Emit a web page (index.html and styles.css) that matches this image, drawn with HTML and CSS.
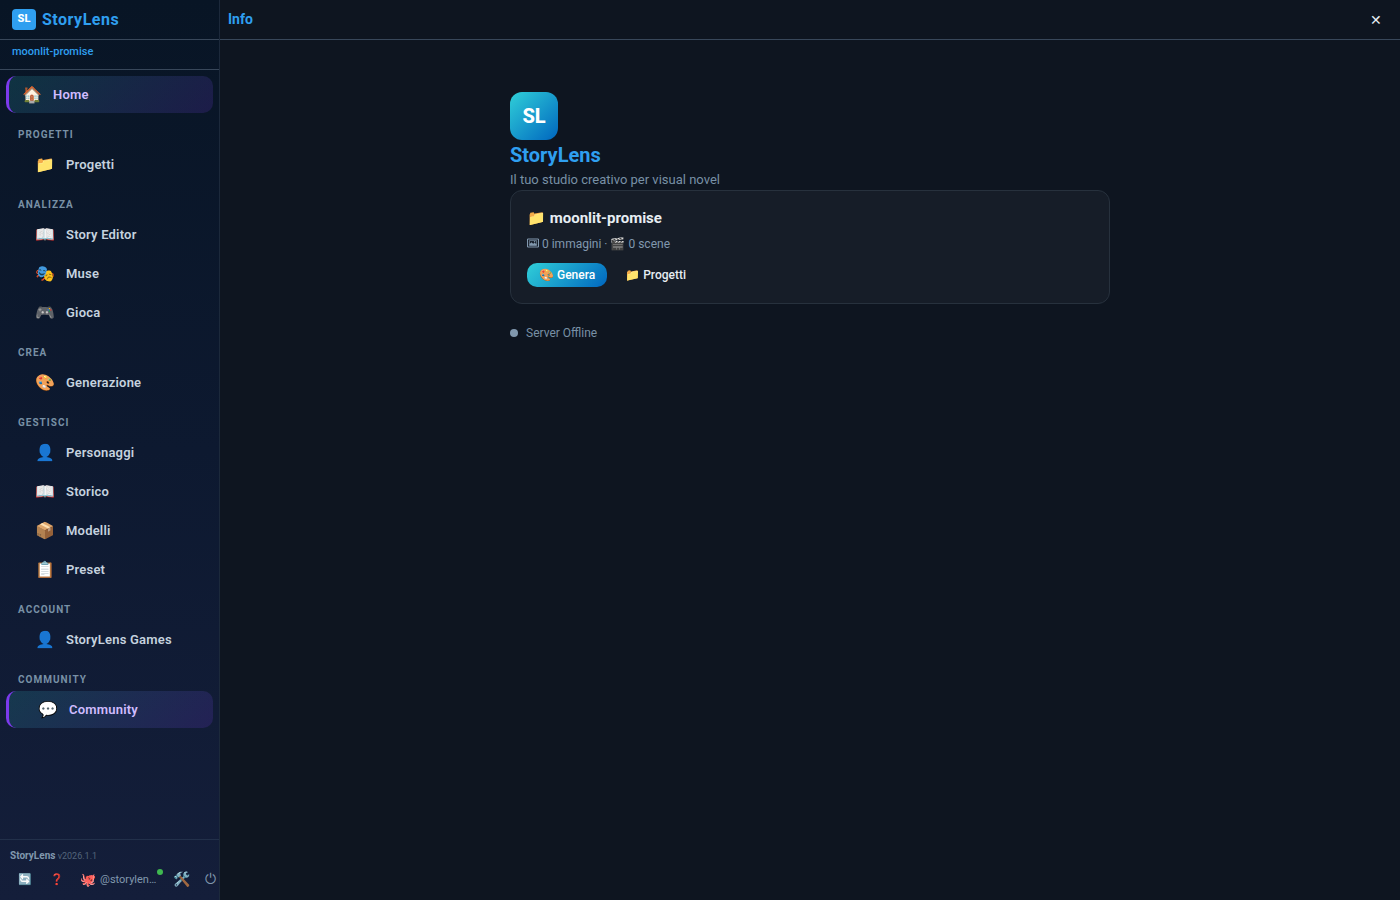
FILE: index.html
```html
<!DOCTYPE html>
<html lang="it">
<head>
    <meta charset="UTF-8">
    <meta name="viewport" content="width=device-width, initial-scale=1.0">
    <title>StoryLens</title>
    <link rel="stylesheet" href="styles.css">
</head>
<body>
    <div class="app">
        <aside class="sidebar">
            <div class="brand">
                <span class="brand-badge">SL</span>
                <span class="brand-name">StoryLens</span>
            </div>
            <div class="current-project">moonlit-promise</div>

            <nav class="nav">
                <a class="nav-item active" href="#home"><span class="nav-icon">🏠</span>Home</a>

                <div class="nav-label">Progetti</div>
                <a class="nav-item sub" href="#progetti"><span class="nav-icon">📁</span>Progetti</a>

                <div class="nav-label">Analizza</div>
                <a class="nav-item sub" href="#editor"><span class="nav-icon">📖</span>Story Editor</a>
                <a class="nav-item sub" href="#muse"><span class="nav-icon">🎭</span>Muse</a>
                <a class="nav-item sub" href="#gioca"><span class="nav-icon">🎮</span>Gioca</a>

                <div class="nav-label">Crea</div>
                <a class="nav-item sub" href="#generazione"><span class="nav-icon">🎨</span>Generazione</a>

                <div class="nav-label">Gestisci</div>
                <a class="nav-item sub" href="#personaggi"><span class="nav-icon">👤</span>Personaggi</a>
                <a class="nav-item sub" href="#storico"><span class="nav-icon">📖</span>Storico</a>
                <a class="nav-item sub" href="#modelli"><span class="nav-icon">📦</span>Modelli</a>
                <a class="nav-item sub" href="#preset"><span class="nav-icon">📋</span>Preset</a>

                <div class="nav-label">Account</div>
                <a class="nav-item sub" href="#account"><span class="nav-icon">👤</span>StoryLens Games</a>

                <div class="nav-label">Community</div>
                <a class="nav-item sub active" href="#community"><span class="nav-icon">💬</span>Community</a>
            </nav>

            <div class="sidebar-footer">
                <div class="version"><strong>StoryLens</strong> v2026.1.1</div>
                <div class="tools">
                    <button class="tool" type="button" aria-label="Aggiorna">🔄</button>
                    <button class="tool" type="button" aria-label="Aiuto">❓</button>
                    <button class="tool account" type="button">
                        <span class="tool-icon">🐙</span>
                        <span class="account-name">@storylen…</span>
                        <span class="online-dot"></span>
                    </button>
                    <button class="tool large" type="button" aria-label="Strumenti">🛠️</button>
                    <button class="tool power" type="button" aria-label="Esci">⏻</button>
                </div>
            </div>
        </aside>

        <main class="main">
            <header class="topbar">
                <h1 class="topbar-title">Info</h1>
                <button class="close" type="button" aria-label="Chiudi">✕</button>
            </header>

            <div class="content">
                <section class="welcome">
                    <div class="logo">SL</div>
                    <h2 class="title">StoryLens</h2>
                    <p class="subtitle">Il tuo studio creativo per visual novel</p>

                    <div class="card">
                        <h3 class="card-title">📁 moonlit-promise</h3>
                        <p class="card-stats">
                            <svg class="picture-icon" viewBox="0 0 12 10" aria-hidden="true">
                                <path fill="none" stroke="currentColor" d="M.5 1h11v8H.5z"/>
                                <path fill="none" stroke="currentColor" stroke-width=".7" d="M2.4 2.6h7.2v4.8H2.4z"/>
                                <path fill="currentColor" d="M2.5 7.4V6l2-1.8 1.6 1.5 1.5-1 2 1.6v1.1z"/>
                                <circle cx="7.6" cy="3.7" r=".7" fill="currentColor"/>
                            </svg>
                            0 immagini · 🎬 0 scene
                        </p>
                        <div class="card-actions">
                            <button class="btn btn-primary" type="button">🎨 Genera</button>
                            <button class="btn" type="button">📁 Progetti</button>
                        </div>
                    </div>

                    <div class="status"><span class="status-dot"></span>Server Offline</div>
                </section>
            </div>
        </main>
    </div>
</body>
</html>
```
FILE: styles.css
```css
* {
    box-sizing: border-box;
    margin: 0;
    padding: 0;
}
body {
    background-color: #0e1520;
    color: #e6edf3;
    font-family: Roboto, sans-serif;
    font-size: 13px;
}
a {
    color: inherit;
    text-decoration: none;
}
button {
    background: none;
    border: none;
    color: inherit;
    font: inherit;
    cursor: pointer;
}
.app {
    display: flex;
    min-height: 100vh;
}

/* Sidebar */
.sidebar {
    display: flex;
    flex-direction: column;
    flex: 0 0 220px;
    width: 220px;
    background: linear-gradient(180deg, #081525 0%, #0d1930 50%, #141e3a 100%);
    border-right: 1px solid #1c293b;
}
.brand {
    display: flex;
    align-items: center;
    gap: 6px;
    height: 40px;
    padding: 0 12px;
    border-bottom: 1px solid #38475a;
}
.brand-badge {
    width: 24px;
    height: 21px;
    border-radius: 4px;
    background-color: #2f9ff0;
    color: #fff;
    font-size: 11px;
    font-weight: 800;
    line-height: 19px;
    text-align: center;
}
.brand-name {
    color: #2f9ff0;
    font-size: 16px;
    font-weight: 700;
    letter-spacing: 0.5px;
}
.current-project {
    height: 30px;
    padding: 4px 12px;
    border-bottom: 1px solid #38475a;
    color: #2f9ff0;
    font-size: 11px;
    font-weight: 500;
    line-height: 15px;
}
.nav {
    display: flex;
    flex-direction: column;
    flex: 1;
    padding: 6px;
}
.nav-item {
    display: flex;
    align-items: center;
    gap: 12px;
    height: 37px;
    padding: 0 14px;
    border-radius: 10px;
    color: #c5d2df;
    font-weight: 600;
    letter-spacing: 0.2px;
}
.nav-item + .nav-item {
    margin-top: 2px;
}
.nav-item.sub {
    padding-left: 30px;
}
.nav-item.active {
    border-left: 3px solid #7c3aed;
    background: linear-gradient(135deg, rgba(48, 207, 208, 0.16), rgba(124, 58, 237, 0.17));
    color: #d0bcff;
}
.nav-icon {
    display: flex;
    justify-content: center;
    width: 18px;
    font-size: 16px;
}
.nav-label {
    padding: 15px 12px 4px;
    color: #7890a5;
    font-size: 10px;
    font-weight: 700;
    letter-spacing: 1px;
    line-height: 14px;
    text-transform: uppercase;
}
.sidebar-footer {
    padding: 8px 0 6px 10px;
    border-top: 1px solid #22304a;
}
.version {
    color: #53657b;
    font-size: 9px;
    line-height: 16px;
}
.version strong {
    color: #8198ae;
    font-size: 10px;
}
.tools {
    display: flex;
    align-items: center;
    gap: 2px;
    height: 30px;
    color: #8198ae;
}
.tool {
    flex: 0 0 auto;
    width: 30px;
    font-size: 11px;
    text-align: center;
}
.tool.large {
    width: 38px;
    font-size: 14px;
}
.tool.power {
    width: 16px;
    font-size: 14px;
}
.tool.account {
    position: relative;
    display: flex;
    align-items: center;
    gap: 4px;
    width: 86px;
    padding-left: 6px;
}
.tool-icon {
    font-size: 13px;
}
.online-dot {
    position: absolute;
    top: -3px;
    right: -3px;
    width: 6px;
    height: 6px;
    border-radius: 50%;
    background-color: #3fb950;
}

/* Main area */
.main {
    display: flex;
    flex-direction: column;
    flex: 1;
}
.topbar {
    display: flex;
    align-items: center;
    justify-content: space-between;
    height: 40px;
    padding: 0 8px;
    border-bottom: 1px solid #38475a;
}
.topbar-title {
    color: #2f9ff0;
    font-size: 14px;
    font-weight: 700;
    line-height: 21px;
}
.close {
    width: 32px;
    height: 28px;
    font-size: 14px;
}
.content {
    flex: 1;
    padding: 52px 24px 24px;
}
.welcome {
    max-width: 600px;
    margin: 0 auto;
}
.logo {
    width: 48px;
    height: 48px;
    border-radius: 12px;
    background: linear-gradient(135deg, #30cfd8, #0066bf);
    color: #fff;
    font-size: 20px;
    font-weight: 800;
    line-height: 48px;
    text-align: center;
}
.title {
    color: #2f9ff0;
    font-size: 20px;
    font-weight: 700;
    line-height: 30px;
}
.subtitle {
    color: #7890a5;
    line-height: 20px;
}
.card {
    padding: 16px;
    border: 1px solid #27313d;
    border-radius: 12px;
    background-color: #161d28;
}
.card-title {
    font-size: 15px;
    font-weight: 700;
    line-height: 22px;
}
.card-stats {
    margin-top: 6px;
    color: #8198ae;
    font-size: 12px;
    line-height: 18px;
}
.picture-icon {
    width: 12px;
    height: 10px;
}
.card-actions {
    display: flex;
    gap: 6px;
    margin-top: 10px;
}
.btn {
    height: 24px;
    padding: 0 12px;
    border-radius: 10px;
    font-size: 12px;
    font-weight: 500;
}
.btn-primary {
    background: linear-gradient(135deg, #30cfd8, #0066bf);
    color: #fff;
}
.status {
    display: flex;
    align-items: center;
    gap: 8px;
    margin-top: 20px;
    color: #7890a5;
    font-size: 12px;
    line-height: 18px;
}
.status-dot {
    width: 8px;
    height: 8px;
    border-radius: 50%;
    background-color: #8198ae;
}
```
